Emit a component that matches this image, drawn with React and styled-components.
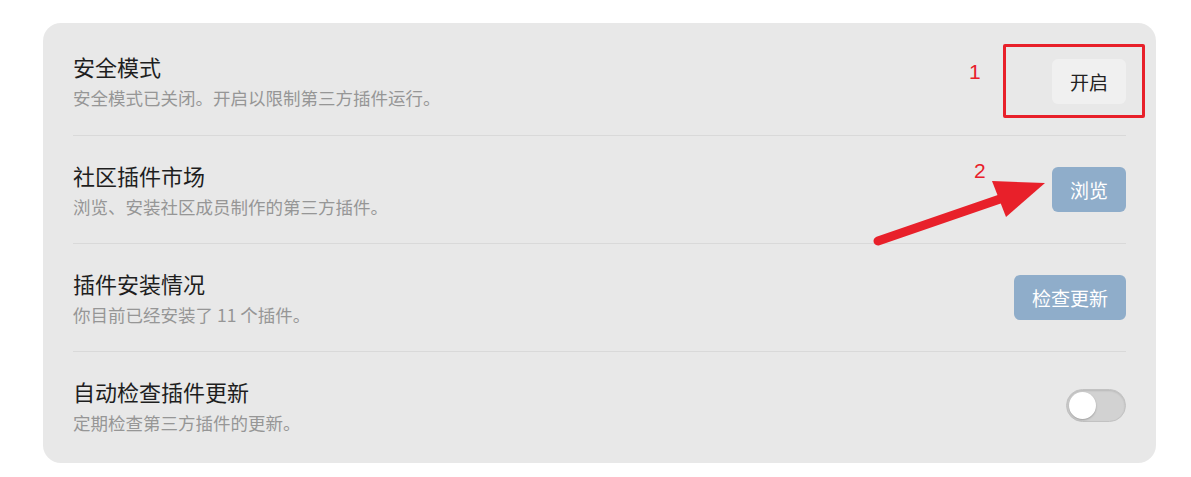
import React from 'react';
import styled, { createGlobalStyle } from 'styled-components';

const GlobalStyle = createGlobalStyle`
  html, body {
    margin: 0;
    padding: 0;
    background: #ffffff;
  }
  body {
    font-family: "Noto Sans CJK SC", "Noto Sans", sans-serif;
  }
`;

const Page = styled.div`
  position: relative;
  width: 1191px;
  height: 477px;
  padding: 23px 35px 0 43px;
  box-sizing: border-box;
`;

const Card = styled.section`
  background: #e8e8e8;
  border-radius: 18px;
  padding: 4px 30px 4px 30px;
  width: 1113px;
  box-sizing: border-box;
`;

const Row = styled.div`
  display: flex;
  align-items: center;
  justify-content: space-between;
  height: 108px;
  box-sizing: border-box;
  border-top: ${p => (p.$first ? 'none' : '1px solid #d9d9d9')};
`;

const Info = styled.div`
  display: flex;
  flex-direction: column;
  gap: 6px;
`;

const Title = styled.div`
  font-size: 22px;
  line-height: 28px;
  color: #1e1e1e;
`;

const Desc = styled.div`
  font-size: 17.5px;
  line-height: 24px;
  color: #969696;
`;

const Button = styled.button`
  font-family: inherit;
  font-size: 19px;
  border: none;
  border-radius: 6px;
  height: 45px;
  padding: 0 18px;
  cursor: pointer;
  background: ${p => (p.$primary ? '#8fadca' : '#f0f0f0')};
  color: ${p => (p.$primary ? '#ffffff' : '#222222')};
`;

const Toggle = styled.div`
  position: relative;
  width: 60px;
  height: 33px;
  border-radius: 17px;
  background: #d2d2d2;
  box-sizing: border-box;
  border: 1px solid #c2c2c2;
  box-shadow: inset 0 1px 2px rgba(0, 0, 0, 0.12);
`;

const Knob = styled.span`
  position: absolute;
  left: 2px;
  top: 2px;
  width: 27px;
  height: 27px;
  border-radius: 50%;
  background: #ffffff;
  box-shadow: 0 1px 2px rgba(0, 0, 0, 0.25);
`;

const Highlight = styled.div`
  position: absolute;
  left: 1003px;
  top: 44px;
  width: 142px;
  height: 74px;
  border: 3px solid #e8202a;
  border-radius: 2px;
  box-sizing: border-box;
`;

const Marker = styled.span`
  position: absolute;
  left: ${p => p.$x}px;
  top: ${p => p.$y}px;
  font-family: "Liberation Sans", Arial, sans-serif;
  font-size: 21px;
  color: #e8202a;
`;

const Overlay = styled.svg`
  position: absolute;
  left: 0;
  top: 0;
  pointer-events: none;
`;

const rows = [
  { title: '安全模式', desc: '安全模式已关闭。开启以限制第三方插件运行。', action: 'button', label: '开启' },
  { title: '社区插件市场', desc: '浏览、安装社区成员制作的第三方插件。', action: 'primary', label: '浏览' },
  { title: '插件安装情况', desc: '你目前已经安装了 11 个插件。', action: 'primary', label: '检查更新' },
  { title: '自动检查插件更新', desc: '定期检查第三方插件的更新。', action: 'toggle' },
];

export default function App() {
  return (
    <>
      <GlobalStyle />
      <Page>
        <Card>
          {rows.map((row, i) => (
            <Row key={row.title} $first={i === 0}>
              <Info>
                <Title>{row.title}</Title>
                <Desc>{row.desc}</Desc>
              </Info>
              {row.action === 'toggle' ? (
                <Toggle>
                  <Knob />
                </Toggle>
              ) : (
                <Button $primary={row.action === 'primary'}>{row.label}</Button>
              )}
            </Row>
          ))}
        </Card>

        <Highlight />
        <Marker $x={969} $y={60}>1</Marker>
        <Marker $x={974} $y={159}>2</Marker>
        <Overlay width="1191" height="477" viewBox="0 0 1191 477">
          <line x1="878" y1="241" x2="1000" y2="199" stroke="#e8202a" strokeWidth="9" strokeLinecap="round" />
          <polygon points="1045,183 1006,217 992,181" fill="#e8202a" />
        </Overlay>
      </Page>
    </>
  );
}
